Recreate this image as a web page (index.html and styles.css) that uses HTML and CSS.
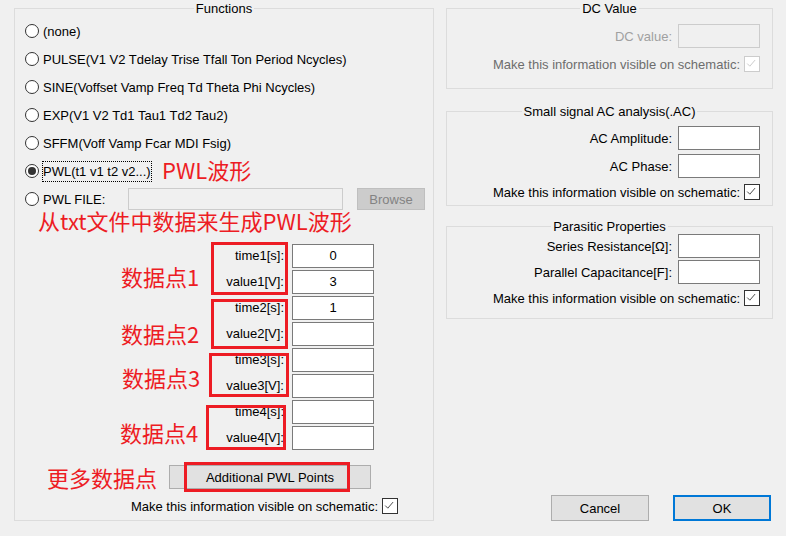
FILE: index.html
```html
<!DOCTYPE html>
<html>
<head>
<meta charset="utf-8">
<link rel="stylesheet" href="styles.css">
</head>
<body>
<div class="dialog">
  <div class="group functions">
    <div class="group-title"><span>Functions</span></div>
    <div class="radio-row"><span class="radio"></span><span class="rlabel">(none)</span></div>
    <div class="radio-row"><span class="radio"></span><span class="rlabel">PULSE(V1 V2 Tdelay Trise Tfall Ton Period Ncycles)</span></div>
    <div class="radio-row"><span class="radio"></span><span class="rlabel">SINE(Voffset Vamp Freq Td Theta Phi Ncycles)</span></div>
    <div class="radio-row"><span class="radio"></span><span class="rlabel">EXP(V1 V2 Td1 Tau1 Td2 Tau2)</span></div>
    <div class="radio-row"><span class="radio"></span><span class="rlabel">SFFM(Voff Vamp Fcar MDI Fsig)</span></div>
    <div class="radio-row"><span class="radio on"></span><span class="rlabel focus">PWL(t1 v1 t2 v2...)</span></div>
    <div class="radio-row file-row"><span class="radio"></span><span class="rlabel">PWL FILE:</span><span class="file-input"></span><button class="browse">Browse</button></div>
    <div class="points">
      <span class="plabel">time1[s]:</span><span class="field c">0</span>
      <span class="plabel">value1[V]:</span><span class="field c">3</span>
      <span class="plabel">time2[s]:</span><span class="field c">1</span>
      <span class="plabel">value2[V]:</span><span class="field c"></span>
      <span class="plabel">time3[s]:</span><span class="field c"></span>
      <span class="plabel">value3[V]:</span><span class="field c"></span>
      <span class="plabel">time4[s]:</span><span class="field c"></span>
      <span class="plabel">value4[V]:</span><span class="field c"></span>
    </div>
    <button class="add">Additional PWL Points</button>
    <div class="check-row">
      <span>Make this information visible on schematic:</span>
      <span class="checkbox"><svg viewBox="0 0 16 16" width="14" height="14"><polyline points="2.5,7.5 5.5,10.5 11.5,3.5" fill="none" stroke="#333" stroke-width="1"/></svg></span>
    </div>
  </div>

  <div class="right">
    <div class="group dc">
      <div class="group-title"><span>DC Value</span></div>
      <div class="frow"><span class="dis-light">DC value:</span><span class="field dis"></span></div>
      <div class="check-row r2 disabled">
        <span class="dis-dark">Make this information visible on schematic:</span>
        <span class="checkbox dis"><svg viewBox="0 0 16 16" width="14" height="14"><polyline points="2.5,7.5 5.5,10.5 11.5,3.5" fill="none" stroke="#c4c4c4" stroke-width="1"/></svg></span>
      </div>
    </div>
    <div class="group ac">
      <div class="group-title"><span>Small signal AC analysis(.AC)</span></div>
      <div class="frow"><span>AC Amplitude:</span><span class="field"></span></div>
      <div class="frow g4"><span>AC Phase:</span><span class="field"></span></div>
      <div class="check-row g6">
        <span>Make this information visible on schematic:</span>
        <span class="checkbox"><svg viewBox="0 0 16 16" width="14" height="14"><polyline points="2.5,7.5 5.5,10.5 11.5,3.5" fill="none" stroke="#333" stroke-width="1"/></svg></span>
      </div>
    </div>
    <div class="group para">
      <div class="group-title"><span>Parasitic Properties</span></div>
      <div class="frow"><span>Series Resistance[Ω]:</span><span class="field"></span></div>
      <div class="frow g2"><span>Parallel Capacitance[F]:</span><span class="field"></span></div>
      <div class="check-row g6">
        <span>Make this information visible on schematic:</span>
        <span class="checkbox"><svg viewBox="0 0 16 16" width="14" height="14"><polyline points="2.5,7.5 5.5,10.5 11.5,3.5" fill="none" stroke="#333" stroke-width="1"/></svg></span>
      </div>
    </div>
    <div class="buttons">
      <button class="btn">Cancel</button>
      <button class="btn ok">OK</button>
    </div>
  </div>

  <div class="notes">
    <span class="note n-pwl">PWL波形</span>
    <span class="note n-file">从txt文件中数据来生成PWL波形</span>
    <span class="note n-p1">数据点1</span>
    <span class="note n-p2">数据点2</span>
    <span class="note n-p3">数据点3</span>
    <span class="note n-p4">数据点4</span>
    <span class="note n-more">更多数据点</span>
    <span class="rbox b1"></span>
    <span class="rbox b2"></span>
    <span class="rbox b3"></span>
    <span class="rbox b4"></span>
    <span class="rbox b5"></span>
  </div>
</div>
</body>
</html>
```

FILE: styles.css
```css
body {
  margin: 0;
  background: #f0f0f0;
  font-family: "Liberation Sans", Arial, sans-serif;
  font-size: 13px;
  color: #000;
}
.dialog {
  position: relative;
  width: 786px;
  height: 536px;
  box-sizing: border-box;
  padding: 8px 0 0 14px;
  display: flex;
  gap: 12px;
}
.group {
  position: relative;
  border: 1px solid #dcdcdc;
  box-sizing: border-box;
}
.group-title {
  position: absolute;
  top: -8px;
  left: 0;
  right: 0;
  text-align: center;
  line-height: 15px;
}
.group-title span {
  background: #f0f0f0;
  padding: 0 2px;
}
.functions {
  width: 420px;
  height: 513px;
  padding-top: 8px;
}
.radio-row {
  display: flex;
  align-items: center;
  height: 28px;
  padding-left: 10px;
}
.radio {
  flex: none;
  width: 14px;
  height: 14px;
  border: 1px solid #333;
  border-radius: 50%;
  background: #fff;
  box-sizing: border-box;
  display: flex;
  align-items: center;
  justify-content: center;
}
.radio.on::after {
  content: "";
  width: 8px;
  height: 8px;
  border-radius: 50%;
  background: #333;
}
.rlabel {
  margin-left: 3px;
  border: 1px dotted transparent;
  padding: 2px 0;
  line-height: 15px;
  white-space: nowrap;
}
.rlabel.focus {
  border-color: #000;
}
.file-row .rlabel {
  width: 86px;
  box-sizing: border-box;
}
.file-input {
  width: 215px;
  height: 22px;
  border: 1px solid #cccccc;
  box-sizing: border-box;
}
.browse {
  margin-left: 14px;
  width: 68px;
  height: 22px;
  padding: 0;
  background: #cccccc;
  border: 1px solid #bfbfbf;
  color: #838383;
  font: inherit;
}
.points {
  display: grid;
  grid-template-columns: 269px 82px;
  column-gap: 8px;
  row-gap: 2px;
  margin-top: 31px;
}
.plabel {
  text-align: right;
  line-height: 24px;
}
.field {
  display: block;
  height: 24px;
  border: 1px solid #7a7a7a;
  background: #fff;
  box-sizing: border-box;
  line-height: 22px;
}
.field.c {
  text-align: center;
}
.field.dis {
  background: #f0f0f0;
  border-color: #cccccc;
}
.add {
  display: block;
  margin: 15px 0 0 154px;
  width: 202px;
  height: 24px;
  padding: 0;
  background: #e1e1e1;
  border: 1px solid #adadad;
  font: inherit;
  color: #000;
}
.check-row {
  display: flex;
  align-items: center;
  justify-content: flex-end;
  gap: 4px;
  height: 16px;
  white-space: nowrap;
}
.functions .check-row {
  margin-top: 9px;
  padding-right: 35px;
}
.checkbox {
  flex: none;
  width: 16px;
  height: 16px;
  border: 1px solid #333;
  background: #fff;
  box-sizing: border-box;
  display: flex;
  align-items: center;
  justify-content: center;
}
.checkbox.dis {
  border-color: #cccccc;
}
.right {
  width: 327px;
  height: 513px;
  display: flex;
  flex-direction: column;
}
.right .group {
  padding-right: 12px;
}
.dc {
  height: 81px;
  padding-top: 15px;
  margin-bottom: 22px;
}
.ac {
  height: 95px;
  padding-top: 14px;
  margin-bottom: 20px;
}
.para {
  height: 93px;
  padding-top: 7px;
}
.frow {
  display: flex;
  justify-content: flex-end;
  align-items: center;
  gap: 6px;
  height: 24px;
  white-space: nowrap;
}
.frow .field {
  width: 82px;
}
.r2 { margin-top: 8px; }
.g2 { margin-top: 2px; }
.g4 { margin-top: 4px; }
.g6 { margin-top: 6px; }
.dis-light { color: #a0a0a0; }
.dis-dark { color: #6d6d6d; }
.buttons {
  margin-top: auto;
  display: flex;
  justify-content: flex-end;
  gap: 24px;
  padding-right: 2px;
}
.btn {
  width: 98px;
  height: 26px;
  padding: 0;
  background: #e1e1e1;
  border: 1px solid #adadad;
  font: inherit;
  color: #000;
}
.btn.ok {
  border: 2px solid #0078d7;
}
.notes {
  position: absolute;
  inset: 0;
  pointer-events: none;
  color: #ed1c24;
  font-family: "Noto Sans CJK SC", sans-serif;
  font-size: 22px;
  line-height: 22px;
}
.note {
  position: absolute;
  white-space: nowrap;
}
.n-pwl { left: 162px; top: 158px; }
.n-file { left: 38px; top: 209px; }
.n-p1 { left: 121px; top: 265px; }
.n-p2 { left: 121px; top: 322px; }
.n-p3 { left: 122px; top: 366px; }
.n-p4 { left: 120px; top: 421px; }
.n-more { left: 47px; top: 466px; }
.rbox {
  position: absolute;
  border: 3px solid #ed1c24;
  box-sizing: border-box;
}
.b1 { left: 211px; top: 242px; width: 77px; height: 53px; }
.b2 { left: 211px; top: 299px; width: 77px; height: 50px; }
.b3 { left: 209px; top: 353px; width: 80px; height: 44px; }
.b4 { left: 206px; top: 405px; width: 80px; height: 45px; }
.b5 { left: 184px; top: 462px; width: 166px; height: 30px; }
```
